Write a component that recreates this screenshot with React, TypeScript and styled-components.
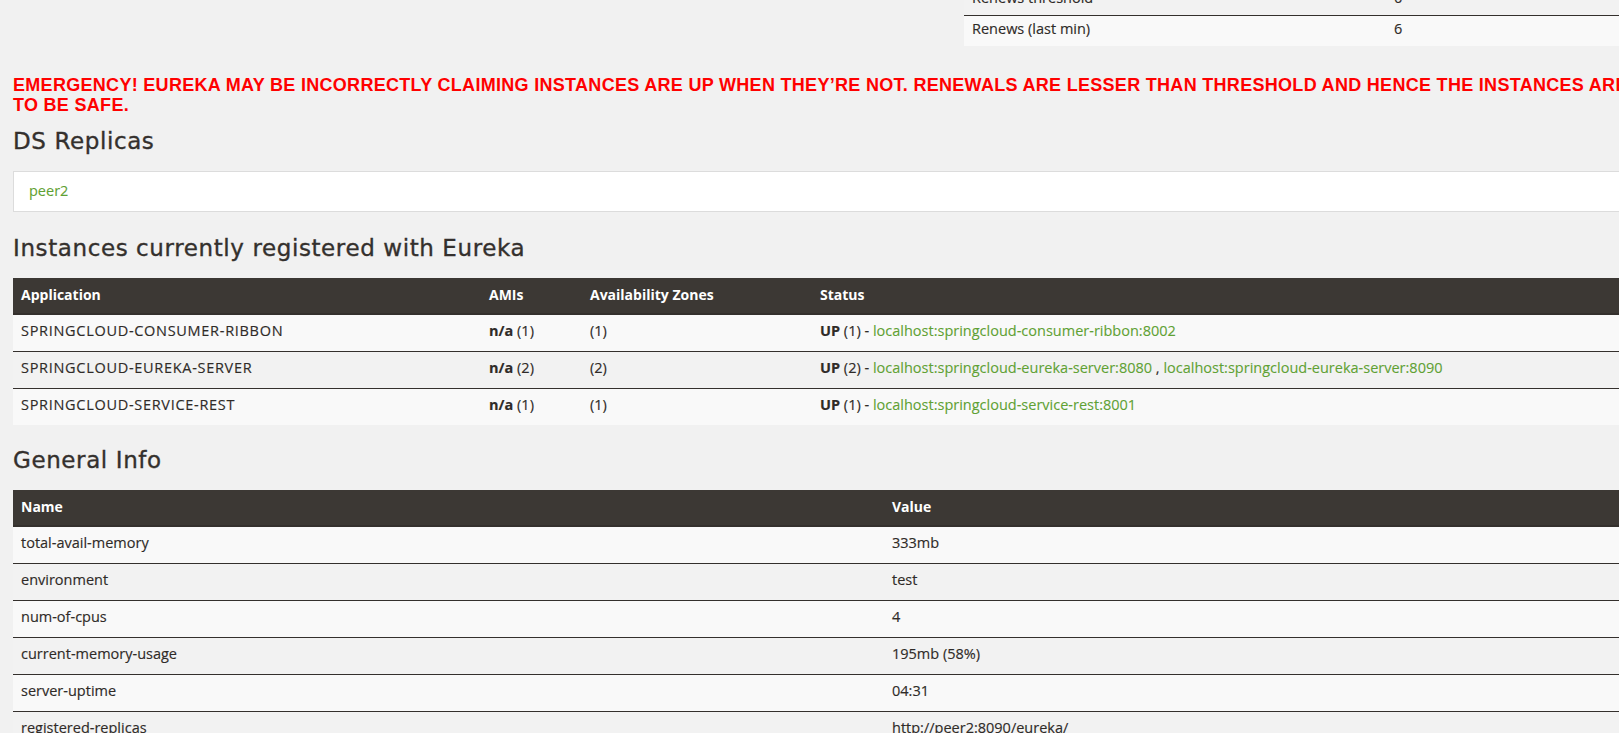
import React from 'react';
import styled, { createGlobalStyle } from 'styled-components';

const GlobalStyle = createGlobalStyle`
  html, body {
    margin: 0;
    padding: 0;
    overflow: hidden;
    background: #f1f1f1;
  }
  body {
    font-family: "Open Sans", "Noto Sans", sans-serif;
    font-size: 14.5px;
    line-height: 20px;
    color: #2f2b28;
    -webkit-text-stroke: 0.15px #2f2b28;
  }
`;

// the page is scrolled down and wider than the window, as in the shot
const Page = styled.div`
  width: 1902px;
  margin: -109px 0 0 13px;
`;

const StatusGrid = styled.div`
  display: grid;
  grid-template-columns: 1fr 1fr;
  align-items: start;
`;

const Table = styled.table`
  width: 100%;
  border-collapse: collapse;
  border-spacing: 0;
  table-layout: fixed;
`;

const HeadCell = styled.th<{ $w?: number }>`
  width: ${(p) => (p.$w ? `${p.$w}px` : 'auto')};
  padding: 7px 8px 8px;
  text-align: left;
  font-size: 14px;
  font-weight: 700;
  color: #fff;
  -webkit-text-stroke: 0;
  background: #3c3834;
  border-bottom: 2px solid #34302d;
`;

const Row = styled.tr`
  &:nth-child(odd) > td {
    background: #f9f9f9;
  }
  &:nth-child(even) > td {
    background: #f2f2f2;
  }
`;

const Cell = styled.td<{ $condensed?: boolean; $w?: number }>`
  width: ${(p) => (p.$w ? `${p.$w}px` : 'auto')};
  padding: ${(p) => (p.$condensed ? '3px 8px 7px' : '6px 8px 10px')};
  border-top: 1px solid #34302d;
  vertical-align: top;
  white-space: nowrap;
`;

const AppName = styled.span`
  letter-spacing: 0.7px;
`;

const Alert = styled.h4`
  margin: 29px 0 0;
  font-family: "Liberation Sans", Arial, sans-serif;
  font-size: 18px;
  line-height: 20px;
  font-weight: 700;
  letter-spacing: 0.3px;
  color: #ff0000;
  -webkit-text-stroke: 0;
  white-space: nowrap;
`;

const Heading = styled.h2<{ $gap: number }>`
  margin: ${(p) => p.$gap}px 0 0;
  font-family: "DejaVu Sans", "Noto Sans", sans-serif;
  font-size: 23px;
  line-height: 26px;
  font-weight: 400;
  letter-spacing: 0.6px;
  color: #34302d;
  -webkit-text-stroke: 0.35px #34302d;
`;

const Spaced = styled.div<{ $gap: number }>`
  margin-top: ${(p) => p.$gap}px;
`;

const ReplicaBox = styled.div`
  margin-top: 17px;
  padding: 9px 15px 10px;
  background: #fff;
  border: 1px solid #dcdcdc;
`;

const Link = styled.a`
  color: #5fa134;
  -webkit-text-stroke: 0.1px #5fa134;
  text-decoration: none;
`;

const Strong = styled.b`
  font-weight: 700;
`;

const statusLeft = [
  ['Environment', 'test'],
  ['Data center', 'default'],
];

const statusRight = [
  ['Current time', '2018-03-14T10:42:18 +0800'],
  ['Uptime', '00:04'],
  ['Lease expiration enabled', 'false'],
  ['Renews threshold', '6'],
  ['Renews (last min)', '6'],
];

const instances = [
  {
    app: 'SPRINGCLOUD-CONSUMER-RIBBON',
    count: 1,
    hosts: ['localhost:springcloud-consumer-ribbon:8002'],
  },
  {
    app: 'SPRINGCLOUD-EUREKA-SERVER',
    count: 2,
    hosts: ['localhost:springcloud-eureka-server:8080', 'localhost:springcloud-eureka-server:8090'],
  },
  {
    app: 'SPRINGCLOUD-SERVICE-REST',
    count: 1,
    hosts: ['localhost:springcloud-service-rest:8001'],
  },
];

const generalInfo = [
  ['total-avail-memory', '333mb'],
  ['environment', 'test'],
  ['num-of-cpus', '4'],
  ['current-memory-usage', '195mb (58%)'],
  ['server-uptime', '04:31'],
  ['registered-replicas', 'http://peer2:8090/eureka/'],
  ['unavailable-replicas', 'http://peer2:8090/eureka/,'],
  ['available-replicas', ''],
];

const StatusTable = ({ rows }: { rows: string[][] }) => (
  <Table>
    <tbody>
      {rows.map(([name, value]) => (
        <Row key={name}>
          <Cell $condensed $w={406}>{name}</Cell>
          <Cell $condensed>{value}</Cell>
        </Row>
      ))}
    </tbody>
  </Table>
);

export default function App() {
  return (
    <>
      <GlobalStyle />
      <Page>
        <StatusGrid>
          <StatusTable rows={statusLeft} />
          <StatusTable rows={statusRight} />
        </StatusGrid>

        <Alert>
          EMERGENCY! EUREKA MAY BE INCORRECTLY CLAIMING INSTANCES ARE UP WHEN THEY’RE NOT. RENEWALS ARE LESSER THAN
          THRESHOLD AND HENCE THE INSTANCES ARE NOT BEING EXPIRED JUST
          <br />
          TO BE SAFE.
        </Alert>

        <Heading $gap={13}>DS Replicas</Heading>
        <ReplicaBox>
          <Link href="#">peer2</Link>
        </ReplicaBox>

        <Heading $gap={23}>Instances currently registered with Eureka</Heading>
        <Spaced $gap={17}>
          <Table>
            <thead>
              <tr>
                <HeadCell $w={452}>Application</HeadCell>
                <HeadCell $w={85}>AMIs</HeadCell>
                <HeadCell $w={214}>Availability Zones</HeadCell>
                <HeadCell>Status</HeadCell>
              </tr>
            </thead>
            <tbody>
              {instances.map((inst) => (
                <Row key={inst.app}>
                  <Cell>
                    <AppName>{inst.app}</AppName>
                  </Cell>
                  <Cell>
                    <Strong>n/a</Strong> ({inst.count})
                  </Cell>
                  <Cell>({inst.count})</Cell>
                  <Cell>
                    <Strong>UP</Strong> ({inst.count}) -{' '}
                    {inst.hosts.map((h, i) => (
                      <React.Fragment key={h}>
                        {i > 0 && ' , '}
                        <Link href="#">{h}</Link>
                      </React.Fragment>
                    ))}
                  </Cell>
                </Row>
              ))}
            </tbody>
          </Table>
        </Spaced>

        <Heading $gap={22}>General Info</Heading>
        <Spaced $gap={17}>
          <Table>
            <thead>
              <tr>
                <HeadCell $w={855}>Name</HeadCell>
                <HeadCell>Value</HeadCell>
              </tr>
            </thead>
            <tbody>
              {generalInfo.map(([name, value]) => (
                <Row key={name}>
                  <Cell>{name}</Cell>
                  <Cell>{value}</Cell>
                </Row>
              ))}
            </tbody>
          </Table>
        </Spaced>
      </Page>
    </>
  );
}
